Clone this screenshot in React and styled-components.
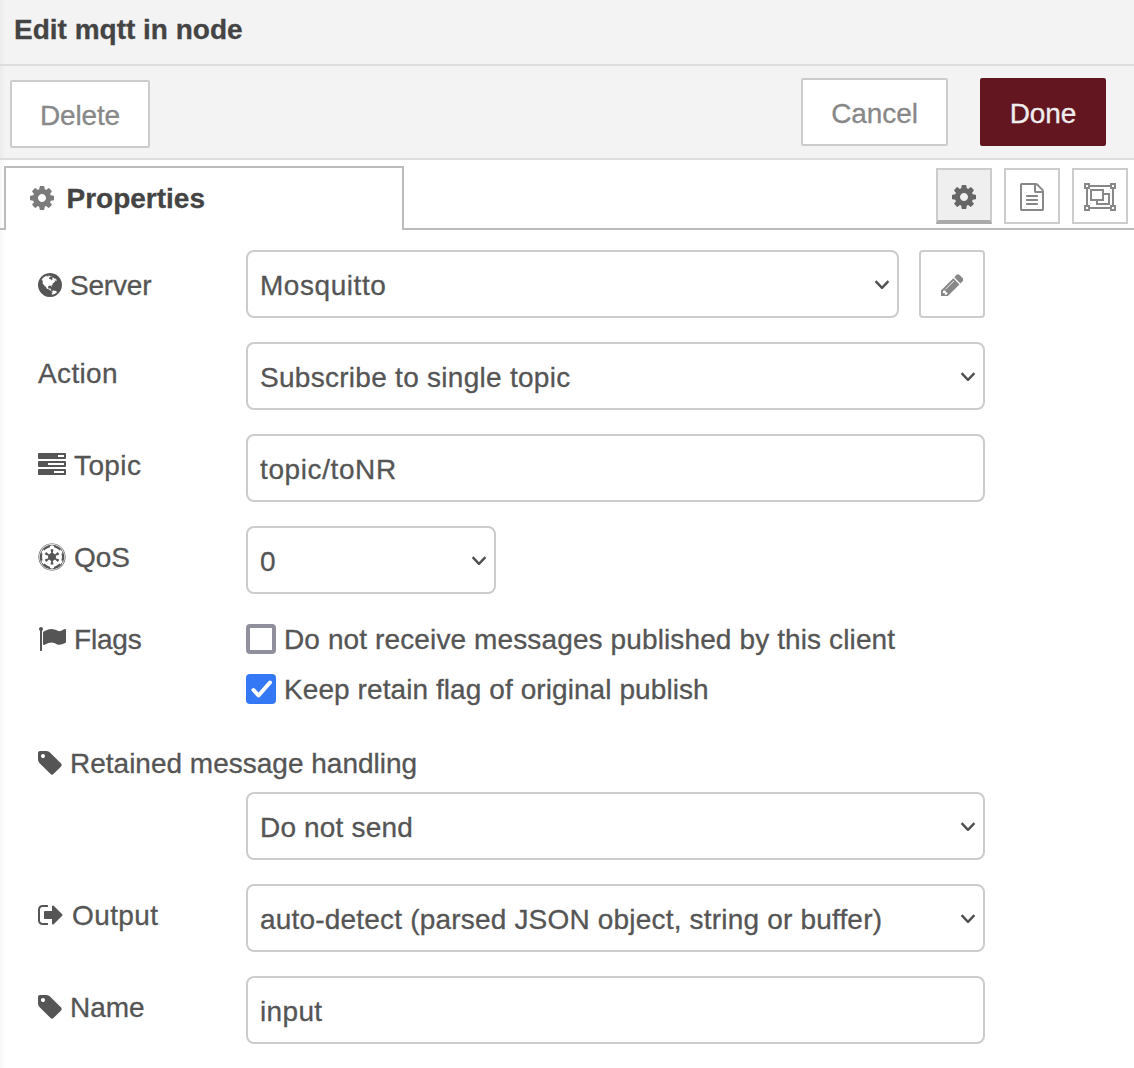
import React from "react";
import styled, { createGlobalStyle } from "styled-components";
import { FaEmpire } from "react-icons/fa";

const GlobalStyle = createGlobalStyle`
  * { box-sizing: border-box; }
  html, body { margin: 0; background: #fff; }
  body {
    font-family: "Helvetica Neue", "Liberation Sans", Arial, sans-serif;
    font-size: 28px;
    line-height: 40px;
    color: #555;
    overflow: hidden;
    -webkit-text-stroke: 0.3px currentColor;
  }
`;

const ICONS = {
  cog: {
    box: "128 128 1536 1536",
    d: "M1152 896q0-106-75-181t-181-75-181 75-75 181 75 181 181 75 181-75 75-181zm512-109v222q0 12-8 23t-20 13l-185 28q-19 54-39 91 35 50 107 138 10 12 10 25t-9 23q-27 37-99 108t-94 71q-12 0-26-9l-138-108q-44 23-91 38-16 136-29 186-7 28-36 28h-222q-14 0-24.5-8.5t-11.5-21.5l-28-184q-49-16-90-37l-141 107q-10 9-25 9-14 0-25-11-126-114-165-168-7-10-7-23 0-12 8-23 15-21 51-66.5t54-70.5q-27-50-41-99l-183-27q-13-2-21-12.5t-8-23.5v-222q0-12 8-23t19-13l186-28q14-46 39-92-40-57-107-138-10-12-10-24 0-10 9-23 26-36 98.5-107.5t94.5-71.5q13 0 26 10l138 107q44-23 91-38 16-136 29-186 7-28 36-28h222q14 0 24.5 8.5t11.5 21.5l28 184q49 16 90 37l142-107q9-9 24-9 13 0 25 10 129 119 165 170 7 8 7 22 0 12-8 23-15 21-51 66.5t-54 70.5q26 50 41 98l183 28q13 2 21 12.5t8 23.5z",
  },
  globe: {
    box: "128 128 1536 1536",
    d: "M896 128q209 0 385.5 103t279.5 279.5 103 385.5-103 385.5-279.5 279.5-385.5 103-385.5-103-279.5-279.5-103-385.5 103-385.5 279.5-279.5 385.5-103zm274 521q-2 1-9.5 9.5t-13.5 9.5q2 0 4.5-5t5-11 3.5-7q6-7 22-15 14-6 52-12 34-8 51 11-2-2 9.5-13t14.5-12q3-2 15-4.5t15-7.5l2-22q-12 1-17.5-7t-6.5-21q0 2-6 8 0-7-4.5-8t-11.5 1-9 1q-10-3-15-7.5t-8-16.5-4-15q-2-5-9.5-11t-9.5-10q-1-2-2.5-5.5t-3-6.5-4-5.5-5.5-2.5-7 5-7.5 10-4.5 5q-3-2-6-1.5t-4.5 1-4.5 3-5 3.5q-3 2-8.5 3t-8.5 2q15-5-1-11-10-4-16-3 9-4 7.5-12t-8.5-14h5q-1-4-8.5-8.5t-17.5-8.5-13-6q-8-5-34-9.5t-33-.5q-5 6-4.5 10.5t4 14 3.5 12.5q1 6-5.5 13t-6.5 12q0 7 14 15.5t10 21.5q-3 8-16 16t-16 12q-5 8-1.5 18.5t10.5 16.5q2 2 1.5 4t-3.5 4.5-5.5 4-6.5 3.5l-3 2q-11 5-20.5-6t-13.5-26q-7-25-16-30-23-8-29 1-5-13-41-26-25-9-58-4 6-1 0-15-7-15-19-12 3-6 4-17.5t1-13.5q3-13 12-23 1-1 7-8.5t9.5-13.5.5-6q35 4 50-11 5-5 11.5-17t10.5-17q9-6 14-5.5t14.5 5.5 14.5 5q14 1 15.5-11t-7.5-20q12 1 3-17-4-7-8-9-12-4-27 5-8 4 2 8-1-1-9.5 10.5t-16.5 17.5-16-5q-1-1-5.5-13.5t-9.5-13.5q-8 0-16 15 3-8-11-15t-24-8q19-12-8-27-7-4-20.5-5t-19.5 4q-5 7-5.5 11.5t5 8 10.5 5.5 11.5 4 8.5 3q14 10 8 14-2 1-8.5 3.5t-11.5 4.5-6 4q-3 4 0 14t-2 14q-5-5-9-17.5t-7-16.5q7 9-25 6l-10-1q-4 0-16 2t-20.5 1-13.5-8q-4-8 0-20 1-4 4-2-4-3-11-9.5t-10-8.5q-46 15-94 41 6 1 12-1 5-2 13-6.5t10-5.5q34-14 42-7l5-5q14 16 20 25-7-4-30-1-20 6-22 12 7 12 5 18-4-3-11.5-10t-14.5-11-15-5q-16 0-22 1-146 80-235 222 7 7 12 8 4 1 5 9t2.5 11 11.5-3q9 8 3 19 1-1 44 27 19 17 21 21 3 11-10 18-1-2-9-9t-9-4q-3 5 .5 18.5t10.5 12.5q-7 0-9.5 16t-2.5 35.5-1 23.5l2 1q-3 12 5.5 34.5t21.5 19.5q-13 3 20 43 6 8 8 9 3 2 12 7.5t15 10 10 10.5q4 5 10 22.5t14 23.5q-2 6 9.5 20t10.5 23q-1 0-2.5 1t-2.5 1q3 7 15.5 14t15.5 13q1 3 2 10t3 11 8 2q2-20-24-62-15-25-17-29-3-5-5.5-15.5t-4.5-14.5q2 0 6 1.5t8.5 3.5 7.5 4 2 3q-3 7 2 17.5t12 18.5 17 19 12 13q6 6 14 19.5t0 13.5q9 0 20 10.5t17 19.5q5 8 8 26t5 24q2 7 8.5 13.5t12.5 9.5l16 8 13 7q5 2 18.5 10.5t21.5 11.5q10 4 16 4t14.5-2.5 13.5-3.5q15-2 29 15t21 21q36 19 55 11-2 1 .5 7.5t8 15.5 9 14.5 5.5 8.5q5 6 18 15t18 15q6-4 7-9-3 8 7 20t18 10q14-3 14-32-31 15-49-18 0-1-2.5-5.5t-4-8.5-2.5-8.5 0-7.5 5-3q9 0 10-3.5t-2-12.5-4-13q-1-8-11-20t-12-15q-5 9-16 8t-16-9q0 1-1.5 5.5t-1.5 6.5q-13 0-15-1 1-3 2.5-17.5t3.5-22.5q1-4 5.5-12t7.5-14.5 4-12.5-4.5-9.5-17.5-2.5q-19 1-26 20-1 3-3 10.5t-5 11.5-9 7q-7 3-24 2t-24-5q-13-8-22.5-29t-9.5-37q0-10 2.5-26.5t3-25-5.5-24.5q3-2 9-9.5t10-10.5q2-1 4.5-1.5t4.5 0 4-1.5 3-6q-1-1-4-3-3-3-4-3 7 3 28.5-1.5t27.5 1.5q15 11 22-2 0-1-2.5-9.5t-.5-13.5q5 27 29 9 3 3 15.5 5t17.5 5q3 2 7 5.5t5.5 4.5 5-.5 8.5-6.5q10 14 12 24 11 40 19 44 7 3 11 2t4.5-9.5 0-14-1.5-12.5l-1-8v-18l-1-8q-15-3-18.5-12t1.5-18.5 15-18.5q1-1 8-3.5t15.5-6.5 12.5-8q21-19 15-35 7 0 11-9-1 0-5-3t-7.5-5-4.5-2q9-5 2-16 5-3 7.5-11t7.5-10q9 12 21 2 8-8 1-16 5-7 20.5-10.5t18.5-9.5q7 2 8-2t1-12 3-12q4-5 15-9t13-5l17-11q3-4 0-4 18 2 31-11 10-11-6-20 3-6-3-9.5t-15-5.5q3-1 11.5-.5t10.5-1.5q15-10-7-16-17-5-43 12zm-163 877q206-36 351-189-3-3-12.5-4.5t-12.5-3.5q-18-7-24-8 1-7-2.5-13t-8-9-12.5-8-11-7q-2-2-7-6t-7-5.5-7.5-4.5-8.5-2-10 1l-3 1q-3 1-5.5 2.5t-5.5 3-4 3 0 2.5q-21-17-36-22-5-1-11-5.5t-10.5-7-10-1.5-11.5 7q-5 5-6 15t-2 13q-7-5 0-17.5t2-18.5q-3-6-10.5-4.5t-12 4.5-11.5 8.5-9 6.5-8.5 5.5-8.5 7.5q-3 4-6 12t-5 11q-2-4-11.5-6.5t-9.5-5.5q2 10 4 35t5 38q7 31-12 48-27 25-29 40-4 22 12 26 0 7-8 20.5t-7 21.5q0 6 2 16z",
  },
  tasks: {
    box: "0 192 1792 1408",
    d: "M0 256q0-26 19-45t45-19h1664q26 0 45 19t19 45v256q0 26-19 45t-45 19H64q-26 0-45-19T0 512zM1280 320v128h384V320zM0 768q0-26 19-45t45-19h1664q26 0 45 19t19 45v256q0 26-19 45t-45 19H64q-26 0-45-19T0 1024zM640 832v128h1024V832zM0 1280q0-26 19-45t45-19h1664q26 0 45 19t19 45v256q0 26-19 45t-45 19H64q-26 0-45-19T0 1536zM1024 1344v128h640v-128z",
  },
  flag: {
    box: "0 128 1792 1536",
    d: "M320 256q0 72-64 110v1266q0 13-9.5 22.5t-22.5 9.5h-64q-13 0-22.5-9.5t-9.5-22.5v-1266q-64-38-64-110 0-53 37.5-90.5t90.5-37.5 90.5 37.5 37.5 90.5zm1472 64v763q0 25-12.5 38.5t-39.5 27.5q-215 116-369 116-61 0-123.5-22t-108.5-48-115.5-48-142.5-22q-192 0-464 146-17 9-33 9-26 0-45-19t-19-45v-742q0-32 31-55 21-14 79-43 236-120 421-120 107 0 200 29t219 88q38 19 88 19 54 0 117.5-21t110-47 88-47 54.5-21q26 0 45 19t19 45z",
  },
  tag: {
    box: "128 128 1536 1536",
    d: "M576 448q0-53-37.5-90.5t-90.5-37.5-90.5 37.5-37.5 90.5 37.5 90.5 90.5 37.5 90.5-37.5 37.5-90.5zm1067 576q0 53-37 90l-491 492q-39 37-91 37-53 0-90-37l-715-716q-38-37-64.5-101t-26.5-117v-416q0-52 38-90t90-38h416q53 0 117 26.5t102 64.5l715 714q37 39 37 91z",
  },
  output: {
    box: "64 256 1600 1280",
    d: "M704 1440q0 4 1 20t.5 26.5-3 23.5-10 19.5-20.5 6.5h-320q-119 0-203.5-84.5t-84.5-203.5v-704q0-119 84.5-203.5t203.5-84.5h320q13 0 22.5 9.5t9.5 22.5q0 4 1 20t.5 26.5-3 23.5-10 19.5-20.5 6.5h-320q-66 0-113 47t-47 113v704q0 66 47 113t113 47h312l11.5 1 11.5 3 8 5.5 7 9 2 13.5zm928-544q0 26-19 45l-544 544q-19 19-45 19t-45-19-19-45v-288h-448q-26 0-45-19t-19-45v-384q0-26 19-45t45-19h448v-288q0-26 19-45t45-19 45 19l544 544q19 19 19 45z",
  },
  pencil: {
    box: "128 128 1536 1536",
    d: "M491 1536l91-91-235-235-91 91v107h128v128h107zm523-928q0-22-22-22-10 0-17 7l-542 542q-7 7-7 17 0 22 22 22 10 0 17-7l542-542q7-7 7-17zm-54-192l416 416-832 832h-416v-416zm683 96q0 53-37 90l-166 166-416-416 166-165q36-38 90-38 53 0 91 38l235 234q37 39 37 91z",
  },
  file: {
    box: "128 0 1536 1792",
    d: "M1596 380q28 28 48 76t20 88v1152q0 40-28 68t-68 28h-1344q-40 0-68-28t-28-68v-1600q0-40 28-68t68-28h896q40 0 88 20t76 48zm-444-244v376h376q-10-29-22-41l-313-313q-12-12-41-22zm384 1528v-1024h-416q-40 0-68-28t-28-68v-416h-768v1536h1280zm-1024-864q0-14 9-23t23-9h704q14 0 23 9t9 23v64q0 14-9 23t-23 9h-704q-14 0-23-9t-9-23v-64zm736 224q14 0 23 9t9 23v64q0 14-9 23t-23 9h-704q-14 0-23-9t-9-23v-64q0-14 9-23t23-9h704zm0 256q14 0 23 9t9 23v64q0 14-9 23t-23 9h-704q-14 0-23-9t-9-23v-64q0-14 9-23t23-9h704z",
  },
  group: {
    box: "0 0 2048 1792",
    d: "M0 0h384v128h1280V0h384v384h-128v1024h128v384h-384v-128H384v128H0v-384h128V384H0zM128 128v128h128V128zM1792 128v128h128V128zM128 1536v128h128v-128zM1792 1536v128h128v-128zM384 256v128H256v1024h128v128h1280v-128h128V384h-128V256zM1280 640h384v768H768v-256H384V384h896zM512 512v512h640V512zM1280 768v384H896v128h640V768z",
  },
};

const Glyph = styled.svg`
  display: block;
  flex: none;
  margin-bottom: ${(p) => p.$lift ?? 0}px;
  fill: currentColor;
  fill-rule: evenodd;
`;

function Icon({ name, size = 28, lift }) {
  const { box, d } = ICONS[name];
  const [, , w, h] = box.split(" ").map(Number);
  return (
    <Glyph
      viewBox={box}
      width={(w * size) / 1792}
      height={(h * size) / 1792}
      $lift={lift}
      aria-hidden="true"
    >
      <path d={d} />
    </Glyph>
  );
}

const Tray = styled.main`
  width: 1134px;
  height: 1068px;
  background: linear-gradient(to right, rgba(0, 0, 0, 0.035), rgba(0, 0, 0, 0) 5px), #fff;
`;

const Header = styled.header`
  height: 66px;
  padding: 10px 14px;
  border-bottom: 2px solid #ddd;
  background: linear-gradient(to right, rgba(0, 0, 0, 0.03), rgba(0, 0, 0, 0) 5px), #f3f3f3;
`;

const Title = styled.h1`
  margin: 0;
  font-size: 28px;
  line-height: 40px;
  font-weight: 700;
  color: #444;
`;

const Toolbar = styled.div`
  display: flex;
  align-items: flex-start;
  height: 94px;
  padding: 12px 28px 0 10px;
  border-bottom: 2px solid #ddd;
  background: linear-gradient(to right, rgba(0, 0, 0, 0.03), rgba(0, 0, 0, 0) 5px), #f3f3f3;
`;

const Button = styled.button`
  width: ${(p) => p.$width}px;
  height: 68px;
  margin: ${(p) => p.$margin || "0"};
  padding: 3px 0 0;
  border: 2px solid ${(p) => (p.$primary ? "#631620" : "#ccc")};
  border-radius: 2px;
  background: ${(p) => (p.$primary ? "#631620" : "#fff")};
  color: ${(p) => (p.$primary ? "#eee" : "#888")};
  font: inherit;
  letter-spacing: ${(p) => p.$tracking ?? 0}px;
  -webkit-text-stroke: inherit;
  -webkit-text-stroke-color: currentColor;
`;

const TabBar = styled.nav`
  display: flex;
  height: 70px;
  padding-top: 6px;
`;

const TabEdge = styled.div`
  width: 4px;
  border-bottom: 2px solid #bbb;
`;

const Tab = styled.div`
  display: flex;
  align-items: center;
  gap: 12.5px;
  width: 400px;
  padding: 0 0 1px 24px;
  border: 2px solid #bbb;
  border-bottom: 0;
  background: #fff;
  color: #7b7b7b;
`;

const TabActions = styled.div`
  display: flex;
  flex: 1;
  justify-content: flex-end;
  gap: 12px;
  padding: 2px 6px 0 0;
  border-bottom: 2px solid #bbb;
`;

const TabButton = styled.button`
  display: flex;
  align-items: center;
  justify-content: center;
  width: 56px;
  height: 56px;
  padding: ${(p) => (p.$active ? "4px 0 0" : "1px 0 0")};
  border: 2px solid #ccc;
  ${(p) => p.$active && "border-bottom: 4px solid #aaa;"}
  background: ${(p) => (p.$active ? "#efefef" : "#fff")};
  color: ${(p) => (p.$active ? "#666" : "#888")};
`;

const Form = styled.form`
  display: flex;
  flex-direction: column;
  gap: 24px;
  padding: 20px 0 0 38px;
`;

const Row = styled.div`
  display: flex;
  height: ${(p) => p.$height || 68}px;
`;

const Label = styled.label`
  display: flex;
  align-items: center;
  gap: ${(p) => p.$gap ?? 8}px;
  width: 208px;
  height: 40px;
  margin-top: ${(p) => p.$top ?? 11}px;
  white-space: nowrap;
  letter-spacing: ${(p) => p.$tracking ?? 0}px;
`;

const Caption = styled.span`
  padding-top: 2px;
`;

const Field = styled.div`
  position: relative;
  width: ${(p) => p.$width || 739}px;
  height: 68px;
`;

const fieldBox = `
  display: block;
  width: 100%;
  height: 68px;
  margin: 0;
  border: 2px solid #ccc;
  border-radius: 8px;
  background: #fff;
  color: #555;
  font: inherit;
  appearance: none;
  outline: 0;
  -webkit-text-stroke: 0.3px #555;
`;

const SelectBox = styled.select`
  ${fieldBox}
  padding: 3px 40px 0 12px;
  letter-spacing: ${(p) => p.$tracking ?? 0}px;
`;

const TextInput = styled.input`
  ${fieldBox}
  padding: 3px 12px 0;
  letter-spacing: ${(p) => p.$tracking ?? 0}px;
`;

const Chevron = styled.svg`
  position: absolute;
  right: 9px;
  top: 28px;
  fill: none;
  stroke: #505050;
  stroke-width: 2.4;
  stroke-linejoin: round;
  pointer-events: none;
`;

const EditButton = styled.button`
  display: flex;
  align-items: center;
  justify-content: center;
  width: 66px;
  height: 68px;
  margin-left: 20px;
  padding: 2px 0 0;
  border: 2px solid #ccc;
  border-radius: 4px;
  background: #fff;
  color: #888;
`;

const Options = styled.div`
  display: flex;
  flex-direction: column;
  gap: 10px;
  padding-top: 1px;
`;

const Option = styled.div`
  display: flex;
  align-items: center;
  gap: 8px;
  height: 40px;
  letter-spacing: ${(p) => p.$tracking ?? 0}px;
`;

const Box = styled.span`
  display: flex;
  align-items: center;
  justify-content: center;
  width: 30px;
  height: 30px;
  border: ${(p) => (p.$checked ? "0" : "4px solid #8f8f9d")};
  border-radius: 4px;
  background: ${(p) => (p.$checked ? "#3478f6" : "#fff")};
`;

const Tick = styled.svg`
  fill: none;
  stroke: #fff;
  stroke-width: 4;
  stroke-linecap: round;
  stroke-linejoin: round;
`;

function Select({ value, width, tracking }) {
  return (
    <Field $width={width}>
      <SelectBox $tracking={tracking} defaultValue={value}>
        <option>{value}</option>
      </SelectBox>
      <Chevron width="16" height="14" viewBox="0 0 16 14">
        <path d="M1.6 3.2 8 9.8 14.4 3.2" />
      </Chevron>
    </Field>
  );
}

function Check({ checked, children, tracking }) {
  return (
    <Option $tracking={tracking}>
      <Box $checked={checked}>
        {checked && (
          <Tick width="30" height="30" viewBox="0 0 30 30">
            <path d="M7.5 16 12.5 21.5 24 8.5" />
          </Tick>
        )}
      </Box>
      <Caption>{children}</Caption>
    </Option>
  );
}

export default function App() {
  return (
    <>
      <GlobalStyle />
      <Tray>
        <Header>
          <Title>Edit mqtt in node</Title>
        </Header>
        <Toolbar>
          <Button $width={140} $margin="2px auto 0 0" $tracking={-0.15}>Delete</Button>
          <Button $width={147} $margin="0 32px 0 0" $tracking={-0.1}>Cancel</Button>
          <Button $width={126} $tracking={-0.1} $primary>Done</Button>
        </Toolbar>
        <TabBar>
          <TabEdge />
          <Tab>
            <Icon name="cog" lift={2} />
            <Title as="span">Properties</Title>
          </Tab>
          <TabActions>
            <TabButton type="button" $active><Icon name="cog" /></TabButton>
            <TabButton type="button"><Icon name="file" /></TabButton>
            <TabButton type="button"><Icon name="group" /></TabButton>
          </TabActions>
        </TabBar>
        <Form>
          <Row>
            <Label $top={15} $tracking={-0.2}>
              <Icon name="globe" />
              <Caption>Server</Caption>
            </Label>
            <Select value="Mosquitto" width={653} tracking={0.55} />
            <EditButton type="button"><Icon name="pencil" size={26.5} /></EditButton>
          </Row>
          <Row>
            <Label $tracking={0.35}>
              <Caption>Action</Caption>
            </Label>
            <Select value="Subscribe to single topic" tracking={0.28} />
          </Row>
          <Row>
            <Label $tracking={0.4}>
              <Icon name="tasks" lift={2} />
              <Caption>Topic</Caption>
            </Label>
            <Field><TextInput defaultValue="topic/toNR" $tracking={0.6} /></Field>
          </Row>
          <Row>
            <Label>
              <FaEmpire size={28} />
              <Caption>QoS</Caption>
            </Label>
            <Select value="0" width={250} />
          </Row>
          <Row $height={101}>
            <Label $top={1} $tracking={-0.2}>
              <Icon name="flag" />
              <Caption>Flags</Caption>
            </Label>
            <Options>
              <Check tracking={0.12}>Do not receive messages published by this client</Check>
              <Check tracking={0.08} checked>Keep retain flag of original publish</Check>
            </Options>
          </Row>
          <Row $height={25}>
            <Label $top={0}>
              <Icon name="tag" />
              <Caption>Retained message handling</Caption>
            </Label>
          </Row>
          <Row>
            <Label />
            <Select value="Do not send" tracking={0.18} />
          </Row>
          <Row>
            <Label $gap={9} $tracking={0.4}>
              <Icon name="output" />
              <Caption>Output</Caption>
            </Label>
            <Select value="auto-detect (parsed JSON object, string or buffer)" tracking={0.19} />
          </Row>
          <Row>
            <Label>
              <Icon name="tag" />
              <Caption>Name</Caption>
            </Label>
            <Field><TextInput defaultValue="input" $tracking={0.35} /></Field>
          </Row>
        </Form>
      </Tray>
    </>
  );
}
